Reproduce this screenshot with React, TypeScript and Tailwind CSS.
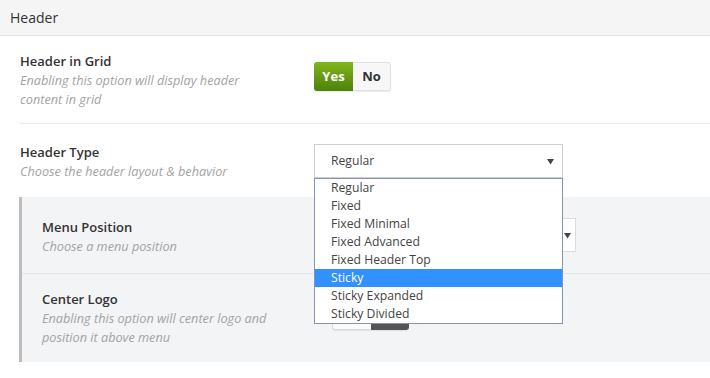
import React from "react";

const options = [
  "Regular",
  "Fixed",
  "Fixed Minimal",
  "Fixed Advanced",
  "Fixed Header Top",
  "Sticky",
  "Sticky Expanded",
  "Sticky Divided",
];

function Caret() {
  return (
    <svg width="7" height="7" viewBox="0 0 7 7" className="fill-[#444]">
      <path d="M0 1h7L3.5 6.5z" />
    </svg>
  );
}

function Toggle({ on }: { on: boolean }) {
  return (
    <div className="flex h-[29px] w-[77px] rounded-[3px] text-[13px] font-bold shadow-[0_1px_1px_rgba(0,0,0,0.08)]">
      <div
        className={
          on
            ? "flex w-[39px] items-center justify-center rounded-l-[3px] bg-gradient-to-b from-[#82b51c] to-[#4d820b] text-white"
            : "flex w-[39px] items-center justify-center rounded-l-[3px] border border-r-0 border-[#dcdcdc] bg-[#fafafa] text-[#333]"
        }
      >
        Yes
      </div>
      <div
        className={
          on
            ? "flex flex-1 items-center justify-center rounded-r-[3px] border border-l-0 border-[#e2e2e2] bg-[#f7f7f7] text-[#333]"
            : "flex flex-1 items-center justify-center rounded-r-[3px] bg-[#555] text-white"
        }
      >
        No
      </div>
    </div>
  );
}

function Label({ title, desc }: { title: string; desc: React.ReactNode }) {
  return (
    <div>
      <div className="text-[13px] font-semibold leading-[19px] text-[#333]">
        {title}
      </div>
      <div className="text-[12.7px] italic leading-[19px] text-[#a3a3a3]">
        {desc}
      </div>
    </div>
  );
}

export default function App() {
  return (
    <div
      className="relative h-[378px] w-[710px] overflow-hidden bg-white"
      style={{ fontFamily: '"Open Sans", "Noto Sans", sans-serif' }}
    >
      <div className="flex h-[36px] items-center border-b border-[#e4e4e4] bg-[#f5f5f5] px-[10px] text-[14px] text-[#333]">
        Header
      </div>

      <div className="ml-[20px] flex border-b border-[#e8e8e8] pb-[14px] pt-[16px]">
        <div className="w-[294px]">
          <Label
            title="Header in Grid"
            desc={
              <>
                Enabling this option will display header
                <br />
                content in grid
              </>
            }
          />
        </div>
        <div className="mt-[10px]">
          <Toggle on />
        </div>
      </div>

      <div className="ml-[20px] flex pt-[19px]">
        <div className="w-[294px]">
          <Label title="Header Type" desc="Choose the header layout & behavior" />
        </div>
        <div className="mt-[1px] flex h-[34px] w-[249px] items-center justify-between border border-[#cfcfcf] bg-white pl-[16px] pr-[8px] text-[12.2px] text-[#444]">
          <span>Regular</span>
          <Caret />
        </div>
      </div>

      <div className="ml-[19px] mt-[16px] border-l-[3px] border-[#bdbdbd] bg-[#f3f4f5]">
        <div className="flex border-b border-[#e4e5e6] pb-[17px] pl-[20px] pt-[21px]">
          <div className="w-[290px]">
            <Label title="Menu Position" desc="Choose a menu position" />
          </div>
          <div className="flex h-[34px] w-[244px] items-center justify-end border border-[#dcdcdc] bg-white pr-[4px]">
            <Caret />
          </div>
        </div>
        <div className="flex pb-[15px] pl-[20px] pt-[16px]">
          <div className="w-[290px]">
            <Label
              title="Center Logo"
              desc={
                <>
                  Enabling this option will center logo and
                  <br />
                  position it above menu
                </>
              }
            />
          </div>
          <div className="mt-[11px]">
            <Toggle on={false} />
          </div>
        </div>
      </div>

      <div className="absolute left-[314px] top-[178px] w-[249px] border border-[#8494b6] bg-white text-[12.2px] text-[#444]">
        {options.map((o) => (
          <div
            key={o}
            className={
              o === "Sticky"
                ? "h-[18px] bg-[#3390ff] pl-[16px] leading-[18px] text-white"
                : "h-[18px] pl-[16px] leading-[18px]"
            }
          >
            {o}
          </div>
        ))}
      </div>
    </div>
  );
}
